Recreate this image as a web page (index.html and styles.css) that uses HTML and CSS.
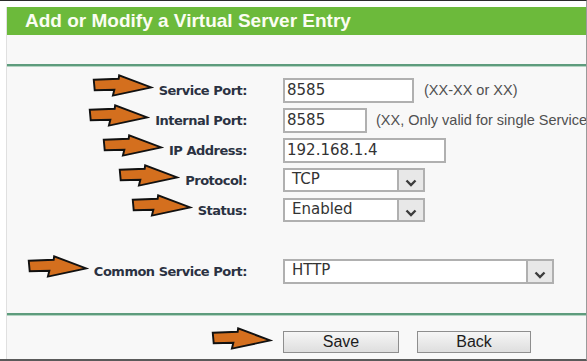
FILE: index.html
```html
<!DOCTYPE html>
<html>
<head>
<meta charset="utf-8">
<link rel="stylesheet" href="styles.css">
</head>
<body>
<div class="frame">
  <div class="panel">
    <div class="header">Add or Modify a Virtual Server Entry</div>
    <div class="rule rule-top"></div>
    <div class="form">
      <div class="row">
        <div class="lbl"><svg class="arrow" viewBox="0 0 64 24"><path d="M2 6 L28 5 L28.5 1.5 L62 14 L22 22.5 L23.5 16.5 L3 17 Z"/></svg><span>Service Port:</span></div>
        <div class="field"><span class="input w-svc">8585</span><span class="hint">(XX-XX or XX)</span></div>
      </div>
      <div class="row">
        <div class="lbl"><svg class="arrow" viewBox="0 0 64 24"><path d="M2 6 L28 5 L28.5 1.5 L62 14 L22 22.5 L23.5 16.5 L3 17 Z"/></svg><span>Internal Port:</span></div>
        <div class="field"><span class="input w-int">8585</span><span class="hint hint-int">(XX, Only valid for single Service</span></div>
      </div>
      <div class="row">
        <div class="lbl"><svg class="arrow" viewBox="0 0 64 24"><path d="M2 6 L28 5 L28.5 1.5 L62 14 L22 22.5 L23.5 16.5 L3 17 Z"/></svg><span>IP Address:</span></div>
        <div class="field"><span class="input w-ip">192.168.1.4</span></div>
      </div>
      <div class="row">
        <div class="lbl"><svg class="arrow" viewBox="0 0 64 24"><path d="M2 6 L28 5 L28.5 1.5 L62 14 L22 22.5 L23.5 16.5 L3 17 Z"/></svg><span>Protocol:</span></div>
        <div class="field"><div class="select w-sel"><span class="sel-text">TCP</span><span class="drop"><svg viewBox="0 0 12 8"><polyline points="1.5,1.5 6,6 10.5,1.5"/></svg></span></div></div>
      </div>
      <div class="row">
        <div class="lbl"><svg class="arrow" viewBox="0 0 64 24"><path d="M2 6 L28 5 L28.5 1.5 L62 14 L22 22.5 L23.5 16.5 L3 17 Z"/></svg><span>Status:</span></div>
        <div class="field"><div class="select w-sel"><span class="sel-text">Enabled</span><span class="drop"><svg viewBox="0 0 12 8"><polyline points="1.5,1.5 6,6 10.5,1.5"/></svg></span></div></div>
      </div>
      <div class="row row-common">
        <div class="lbl"><svg class="arrow" viewBox="0 0 64 24"><path d="M2 6 L28 5 L28.5 1.5 L62 14 L22 22.5 L23.5 16.5 L3 17 Z"/></svg><span>Common Service Port:</span></div>
        <div class="field"><div class="select w-common"><span class="sel-text">HTTP</span><span class="drop"><svg viewBox="0 0 12 8"><polyline points="1.5,1.5 6,6 10.5,1.5"/></svg></span></div></div>
      </div>
    </div>
    <div class="rule rule-bottom"></div>
    <div class="buttons">
      <svg class="arrow arrow-btn" viewBox="0 0 64 24"><path d="M2 6 L28 5 L28.5 1.5 L62 14 L22 22.5 L23.5 16.5 L3 17 Z"/></svg>
      <button class="btn btn-save">Save</button>
      <button class="btn btn-back">Back</button>
    </div>
  </div>
</div>
</body>
</html>
```

FILE: styles.css
```css
* { box-sizing: border-box; }
html, body { margin: 0; padding: 0; background: #ffffff; }

.frame {
  width: 587px;
  height: 361px;
  border-top: 1px solid #2a2a2a;
  border-bottom: 2px solid #5a5a5a;
  border-right: 1px solid #9a9a9a;
  padding: 6px 0 0 6px;
  background: #ffffff;
  overflow: hidden;
}

.panel {
  height: 100%;
  background: #f8f8f8;
  border-left: 1px solid #e0e0e0;
  overflow: hidden;
}

.header {
  height: 28px;
  line-height: 28px;
  background: #6cba3b;
  color: #fbfdf2;
  font-family: "Liberation Sans", Arial, sans-serif;
  font-weight: bold;
  font-size: 19px;
  padding-left: 18px;
  white-space: nowrap;
}

.rule {
  height: 2px;
  background: #5e9c7d;
  box-shadow: 0 1px 0 #b4d4c2;
}
.rule-top { margin-top: 29px; }
.rule-bottom { margin-top: 28px; }

.form { padding-top: 8px; }

.row {
  display: grid;
  grid-template-columns: 240px auto;
  column-gap: 36px;
  height: 30px;
  align-items: center;
}
.row-common { margin-top: 31px; }

.lbl {
  display: flex;
  justify-content: flex-end;
  align-items: center;
  font-family: "DejaVu Sans", Verdana, sans-serif;
  font-weight: bold;
  font-size: 13px;
  letter-spacing: -0.5px;
  color: #2b3242;
  white-space: nowrap;
}

.arrow {
  width: 63px;
  height: 23px;
  margin-right: 5px;
  margin-bottom: 9px;
  flex: none;
}
.arrow path {
  fill: #d46f1e;
  stroke: #111;
  stroke-width: 2;
  stroke-linejoin: miter;
}

.field {
  display: flex;
  align-items: center;
  white-space: nowrap;
  min-width: 0;
}

.input {
  display: block;
  flex: none;
  height: 25px;
  line-height: 21px;
  border: 2px solid #b0b0b0;
  background: #ffffff;
  font-family: "DejaVu Sans", Verdana, sans-serif;
  font-size: 15px;
  color: #333;
  padding-left: 2px;
}
.w-svc { width: 131px; }
.w-int { width: 84px; }
.w-ip { width: 163px; }

.hint {
  font-family: "Liberation Sans", Arial, sans-serif;
  font-size: 14.5px;
  color: #505050;
  margin-left: 10px;
}
.hint-int { margin-left: 9px; }

.select {
  display: flex;
  height: 24px;
  border: 2px solid #b0b0b0;
  background: #ffffff;
}
.w-sel { width: 142px; }
.w-common { width: 271px; height: 25px; }

.sel-text {
  flex: 1;
  font-family: "DejaVu Sans", Verdana, sans-serif;
  font-size: 15px;
  color: #333;
  padding-left: 7px;
  line-height: 19px;
}

.drop {
  width: 26px;
  flex: none;
  background: #e8e8e8;
  border-left: 2px solid #b0b0b0;
  display: flex;
  justify-content: center;
  align-items: flex-end;
  padding-bottom: 3px;
}
.drop svg {
  width: 12px;
  height: 8px;
}
.drop polyline {
  fill: none;
  stroke: #3c3c3c;
  stroke-width: 2.4;
}

.buttons {
  display: flex;
  align-items: center;
  margin-top: 12px;
  padding-left: 203px;
}
.arrow-btn {
  margin-right: 10px;
  margin-bottom: 6px;
}

.btn {
  height: 22px;
  border: 1px solid #8e8e8e;
  background: linear-gradient(#f6f6f6, #dedede);
  font-family: "Liberation Sans", Arial, sans-serif;
  font-size: 16px;
  color: #1c1c1c;
  padding: 0;
  line-height: 20px;
}
.btn-save { width: 116px; }
.btn-back { width: 114px; margin-left: 18px; }
```
